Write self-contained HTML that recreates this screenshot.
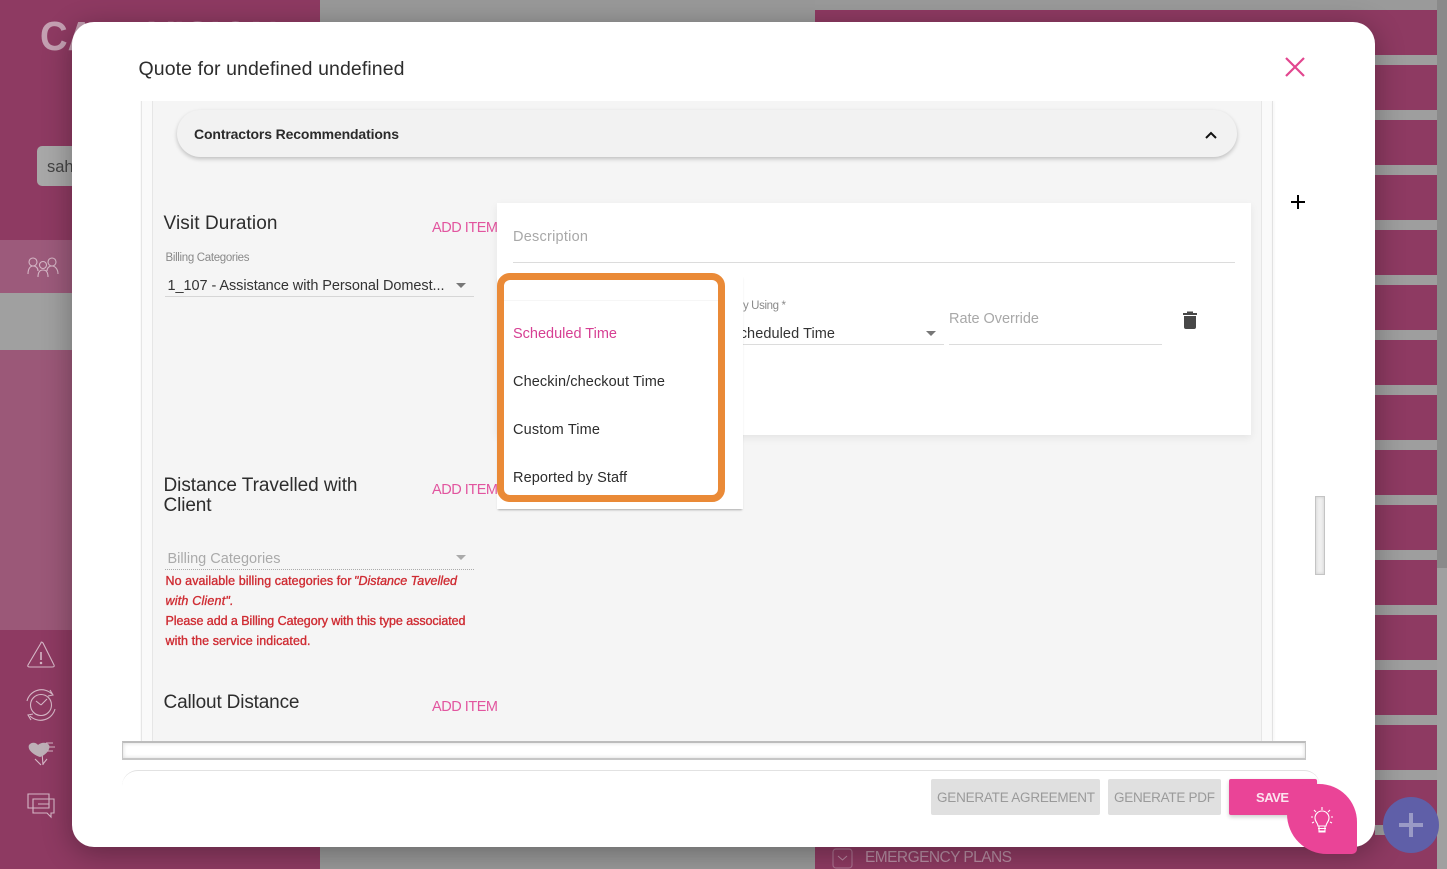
<!DOCTYPE html>
<html>
<head>
<meta charset="utf-8">
<title>Quote</title>
<style>
html,body{margin:0;padding:0;width:1447px;height:869px;overflow:hidden;background:#9a9a9a}
.a{position:absolute;display:block}
svg{position:absolute;left:0;top:0;overflow:visible}
text{font-family:"Liberation Sans",sans-serif;font-size:14px;fill:#333}
#stripes div{position:absolute;left:1375px;width:62px;height:10px;background:#9e9e9e}
</style>
</head>
<body>
<!-- background -->
<div class="a" style="left:320px;top:0;width:495px;height:869px;background:#999"></div>
<div class="a" style="left:0;top:0;width:320px;height:869px;background:#8e3a62"></div>
<div class="a" style="left:0;top:240px;width:320px;height:53px;background:#9c5a7b"></div>
<div class="a" style="left:0;top:293px;width:320px;height:57px;background:#a0a0a0"></div>
<div class="a" style="left:0;top:350px;width:320px;height:280px;background:#9b5878"></div>
<div class="a" style="left:815px;top:10px;width:622px;height:859px;background:#8e3a62"></div>
<div id="stripes">
<div style="top:55px"></div><div style="top:110px"></div><div style="top:165px"></div><div style="top:220px"></div><div style="top:275px"></div><div style="top:330px"></div><div style="top:385px"></div><div style="top:440px"></div><div style="top:495px"></div><div style="top:550px"></div><div style="top:605px"></div><div style="top:660px"></div><div style="top:715px"></div><div style="top:770px"></div><div style="top:825px"></div>
</div>
<div class="a" style="left:1437px;top:0;width:10px;height:568px;background:#8a8a8a"></div>
<div class="a" style="left:1437px;top:568px;width:10px;height:301px;background:#a0a0a0"></div>
<div class="a" style="left:37px;top:146px;width:80px;height:40px;background:#a8a8a8;border-radius:5px"></div>
<svg width="1447" height="869">
<text x="40" y="50" textLength="238" lengthAdjust="spacingAndGlyphs" style="font-size:41px;fill:#c4a0b2;font-weight:bold">CAREVISION</text>
<text x="47" y="172" style="font-size:16.500px;fill:#444">sah</text>
<g fill="none" stroke="#d5b7c6" stroke-width="1.100">
<circle cx="33" cy="262" r="4"/><circle cx="43" cy="265" r="3.500"/><circle cx="52" cy="262" r="4"/>
<path d="M28 274c0-5 2-8 5-8s5 2 5 5M38 277c0-5 2-7 5-7s5 2 5 7M47 271c0-3 2-5 5-5s6 3 6 8"/>
<path d="M41 643 L28 665 Q27 667 30 667 L52 667 Q55 667 54 665 L43 643 Q41 641 41 643Z"/>
<path d="M41 652v8" stroke-width="1.600"/><circle cx="41" cy="663" r=".7"/>
<circle cx="41" cy="705" r="10.500"/>
<path d="M27 701a15 15 0 0 1 25-7M55 709a15 15 0 0 1-25 7M50 690l3 5-5 1M31 720l-3-5 5-1M41 705l-5-4M41 705l6-6"/>
<path d="M43 765l-1-13M35 759l6 6M47 759l-4 5"/>
<path d="M28 794h21v14h-21zM33 799h21v14h-3l0 4-4-4h-14zM38 804h11M38 808h11"/>
</g>
<path d="M29 745c3-4 8-2 9 0 3-3 9-3 11 0 2 4-3 10-9 12-6-2-13-7-11-12Z" fill="#bdb0b7"/>
<path d="M46 743h7M49 747h6M47 751h6" stroke="#d5b7c6" stroke-width="1"/>
<rect x="833" y="849" width="19" height="19" rx="3" fill="none" stroke="#a96f8c" stroke-width="1.200"/>
<path d="M838 856l4.500 4 4.500-4" fill="none" stroke="#b98aa2" stroke-width="1"/>
<text x="865" y="862" textLength="147" style="font-size:15.500px;fill:#b78ea3">EMERGENCY PLANS</text>
</svg>

<!-- modal -->
<div class="a" style="left:72px;top:22px;width:1303px;height:825px;background:#fff;border-radius:22px;box-shadow:0 6px 30px rgba(0,0,0,.32)"></div>
<div class="a" style="left:140px;top:101px;width:1133px;height:640px;background:#fafafa"></div>
<div class="a" style="left:141px;top:101px;width:1px;height:640px;background:#e6e6e6"></div>
<div class="a" style="left:152px;top:101px;width:1110px;height:640px;background:#f5f5f5;border-left:1px solid #e6e6e6;border-right:1px solid #e6e6e6;box-sizing:border-box"></div>
<div class="a" style="left:1272px;top:101px;width:1px;height:640px;background:#e2e2e2;box-shadow:1px 0 2px rgba(0,0,0,.08)"></div>
<div class="a" style="left:177px;top:110px;width:1060px;height:47px;background:#f2f2f2;border-radius:24px;box-shadow:0 2px 4px rgba(0,0,0,.22)"></div>
<div class="a" style="left:122px;top:741px;width:1184px;height:19px;box-sizing:border-box;background:#fff;border:1px solid #c6c6c6;border-top:2px solid #bcbcbc;border-bottom:2px solid #c6c6c6;box-shadow:inset 0 0 4px rgba(0,0,0,.16)"></div>
<div class="a" style="left:122px;top:770px;width:1198px;height:50px;box-sizing:border-box;border-top:1px solid #e2e2e2;border-radius:16px 16px 0 0"></div>
<div class="a" style="left:1315px;top:496px;width:10px;height:79px;box-sizing:border-box;background:#efefef;border:1px solid #c4c4c4;box-shadow:inset 0 0 3px rgba(0,0,0,.15)"></div>
<div class="a" style="left:165px;top:296px;width:309px;height:1px;background:#d6d6d6"></div>
<div class="a" style="left:165px;top:569px;width:309px;height:0;border-top:1px dotted #aaa"></div>

<svg width="1447" height="869">
<text x="138.500" y="75" textLength="266" style="font-size:19.500px;fill:#2d2d2d">Quote for undefined undefined</text>
<path d="M1286 58l18 18M1304 58l-18 18" stroke="#e2468f" stroke-width="2.200" fill="none"/>
<path d="M1291 202h14M1298 195v14" stroke="#000" stroke-width="2" fill="none"/>
<text x="194" y="139" textLength="205" style="font-size:14px;font-weight:bold;fill:#2b2b2b">Contractors Recommendations</text>
<path d="M1206 138l5-5 5 5" fill="none" stroke="#111" stroke-width="2"/>
<text x="163.500" y="229" textLength="114" style="font-size:19px;fill:#2d2d2d">Visit Duration</text>
<text x="432" y="232" textLength="66" style="font-size:14.500px;fill:#e2559f">ADD ITEM</text>
<text x="165.500" y="261" textLength="84" style="font-size:11.500px;fill:#8a8a8a">Billing Categories</text>
<text x="167.500" y="290" textLength="277" style="font-size:14.500px;fill:#333">1_107 - Assistance with Personal Domest...</text>
<path d="M456 283h10l-5 5z" fill="#777"/>
<text x="163.500" y="491" textLength="194" style="font-size:19px;fill:#2d2d2d">Distance Travelled with</text>
<text x="163.500" y="511" textLength="48" style="font-size:19px;fill:#2d2d2d">Client</text>
<text x="432" y="494" textLength="66" style="font-size:14.500px;fill:#e2559f">ADD ITEM</text>
<text x="167.500" y="563" textLength="113" style="font-size:14.500px;fill:#aaa">Billing Categories</text>
<path d="M456 555h10l-5 5z" fill="#aaa"/>
<g>
<text x="165.500" y="585" textLength="186" style="font-size:12.500px;fill:#cf2c33;stroke:#cf2c33;stroke-width:.35px">No available billing categories for</text>
<text x="354" y="585" textLength="103" style="font-size:12.500px;font-style:italic;fill:#cf2c33;stroke:#cf2c33;stroke-width:.35px">"Distance Tavelled</text>
<text x="165.500" y="605" textLength="68" style="font-size:12.500px;font-style:italic;fill:#cf2c33;stroke:#cf2c33;stroke-width:.35px">with Client".</text>
<text x="165.500" y="625" textLength="300" style="font-size:12.500px;fill:#cf2c33;stroke:#cf2c33;stroke-width:.35px">Please add a Billing Category with this type associated</text>
<text x="165.500" y="645" textLength="145" style="font-size:12.500px;fill:#cf2c33;stroke:#cf2c33;stroke-width:.35px">with the service indicated.</text>
</g>
<text x="163.500" y="708" textLength="136" style="font-size:19px;fill:#2d2d2d">Callout Distance</text>
<text x="432" y="711" textLength="66" style="font-size:14.500px;fill:#e2559f">ADD ITEM</text>
</svg>

<!-- card -->
<div class="a" style="left:497px;top:203px;width:754px;height:232px;background:#fff;box-shadow:0 3px 8px rgba(0,0,0,.07)"></div>
<div class="a" style="left:513px;top:262px;width:722px;height:1px;background:#dcdcdc"></div>
<div class="a" style="left:740px;top:344px;width:204px;height:1px;background:#dcdcdc"></div>
<div class="a" style="left:949px;top:344px;width:213px;height:1px;background:#dcdcdc"></div>
<svg width="1447" height="869">
<text x="513" y="241" textLength="75" style="font-size:14.500px;fill:#a8a8a8">Description</text>
<text x="743" y="309" textLength="43" style="font-size:11.500px;fill:#8a8a8a">y Using *</text>
<text x="730" y="338" textLength="105" style="font-size:14.500px;fill:#333">Scheduled Time</text>
<path d="M926 331h10l-5 5z" fill="#777"/>
<text x="949" y="323" textLength="90" style="font-size:14.500px;fill:#a8a8a8">Rate Override</text>
<path d="M1183 313h14v2h-14zM1187 311.500h6v2h-6zM1184 316h12v11q0 2-2 2h-8q-2 0-2-2z" fill="#474747"/>
</svg>

<!-- dropdown -->
<div class="a" style="left:497px;top:275px;width:246px;height:234px;background:#fff;box-shadow:0 2px 2px -1px rgba(0,0,0,.3)"></div>
<div class="a" style="left:504px;top:300px;width:214px;height:1px;background:#f6f6f6"></div>
<svg width="1447" height="869">
<text x="513" y="338" textLength="104" style="font-size:14.500px;fill:#d63f93">Scheduled Time</text>
<text x="513" y="386" textLength="152" style="font-size:14.500px;fill:#2d2d2d">Checkin/checkout Time</text>
<text x="513" y="434" textLength="87" style="font-size:14.500px;fill:#2d2d2d">Custom Time</text>
<text x="513" y="482" textLength="114" style="font-size:14.500px;fill:#2d2d2d">Reported by Staff</text>
</svg>
<div class="a" style="left:497px;top:273px;width:228px;height:229px;box-sizing:border-box;border:7px solid #ea8a37;border-radius:13px"></div>

<!-- footer -->
<div class="a" style="left:931px;top:779px;width:169px;height:36px;background:#e0e0e0;border-radius:2px"></div>
<div class="a" style="left:1108px;top:779px;width:113px;height:36px;background:#e0e0e0;border-radius:2px"></div>
<div class="a" style="left:1229px;top:779px;width:88px;height:36px;background:#ea4497;border-radius:2px;box-shadow:0 2px 4px rgba(0,0,0,.2)"></div>
<div class="a" style="left:1287px;top:784px;width:70px;height:70px;background:#ea4497;border-radius:24px 38px 5px 40px"></div>
<div class="a" style="left:1383px;top:797px;width:56px;height:56px;background:#5f5fa8;border-radius:50%"></div>
<svg width="1447" height="869">
<text x="937" y="802" textLength="158" style="font-size:13.500px;fill:#9a9a9a">GENERATE AGREEMENT</text>
<text x="1114" y="802" textLength="101" style="font-size:13.500px;fill:#9a9a9a">GENERATE PDF</text>
<text x="1256" y="802" textLength="33" style="font-size:13px;font-weight:bold;fill:#fbe3ef">SAVE</text>
<g fill="none" stroke="#fff" stroke-width="1.100">
<path d="M1318 826c0-3-3-4-3-8a7 7 0 0 1 14 0c0 4-3 5-3 8z"/>
<path d="M1318 828.500h8M1318.500 831h7M1319 826v6h6v-6"/>
<path d="M1322 807v3M1314 810l2 2M1330 810l-2 2M1311 817h2M1331 817h2M1312 823l2-1M1332 823l-2-1"/>
</g>
<path d="M1399 825h24M1411 813v24" stroke="#9a9ac6" stroke-width="4" fill="none"/>
</svg>
</body>
</html>
